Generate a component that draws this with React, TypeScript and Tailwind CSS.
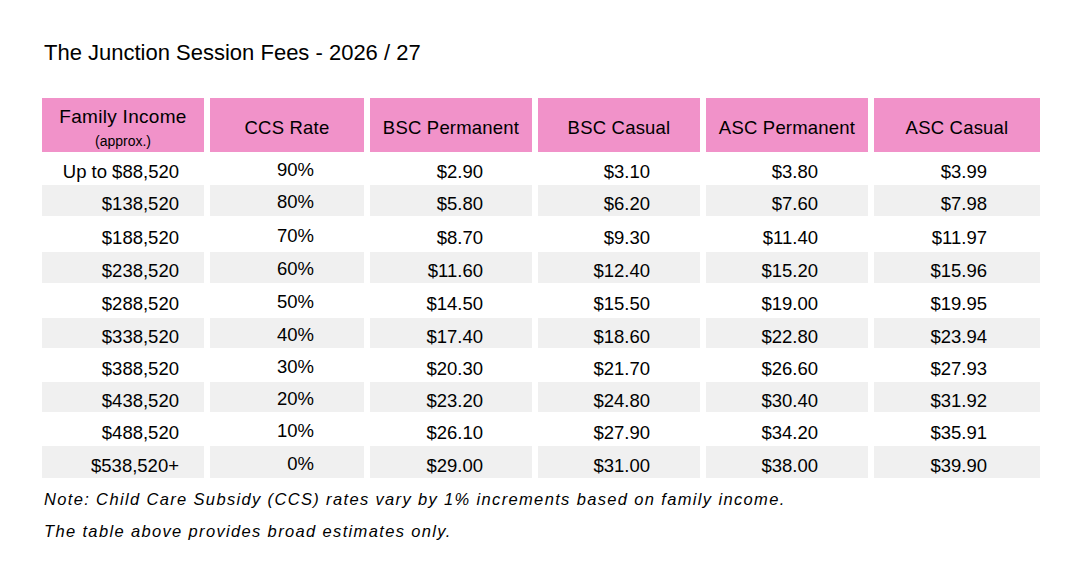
import React from "react";

type Row = { inc: string; ccs: string; v: string[] };

const rows: Row[] = [
  { inc: "Up to $88,520", ccs: "90%", v: ["$2.90", "$3.10", "$3.80", "$3.99"] },
  { inc: "$138,520", ccs: "80%", v: ["$5.80", "$6.20", "$7.60", "$7.98"] },
  { inc: "$188,520", ccs: "70%", v: ["$8.70", "$9.30", "$11.40", "$11.97"] },
  { inc: "$238,520", ccs: "60%", v: ["$11.60", "$12.40", "$15.20", "$15.96"] },
  { inc: "$288,520", ccs: "50%", v: ["$14.50", "$15.50", "$19.00", "$19.95"] },
  { inc: "$338,520", ccs: "40%", v: ["$17.40", "$18.60", "$22.80", "$23.94"] },
  { inc: "$388,520", ccs: "30%", v: ["$20.30", "$21.70", "$26.60", "$27.93"] },
  { inc: "$438,520", ccs: "20%", v: ["$23.20", "$24.80", "$30.40", "$31.92"] },
  { inc: "$488,520", ccs: "10%", v: ["$26.10", "$27.90", "$34.20", "$35.91"] },
  { inc: "$538,520+", ccs: "0%", v: ["$29.00", "$31.00", "$38.00", "$39.90"] },
];

const heights = ["h-[33px]", "h-[31px]", "h-[36px]", "h-[31px]", "h-[35px]", "h-[30px]", "h-[34px]", "h-[30px]", "h-[34px]", "h-[32px]"];
const valPad = ["pr-[49px]", "pr-[50px]", "pr-[50px]", "pr-[53px]"];

const grid = "grid grid-cols-[162px_154px_162px_162px_162px_166px] gap-x-[6px]";

export default function App() {
  return (
    <div className="w-[1090px] h-[580px] bg-white pl-[42px] pt-[39px] text-black font-['Liberation_Sans',Arial,sans-serif]">
      <div className="pl-[2px] text-[22px] leading-[28px] h-[28px]">The Junction Session Fees - 2026 / 27</div>
      <div className="mt-[31px]">
        <div className={`${grid} h-[54px]`}>
          <div className="bg-[#f192c9] flex flex-col items-center pt-[8px]">
            <div className="text-[19px] leading-[22px] tracking-[0.3px]">Family Income</div>
            <div className="text-[14px] leading-[26px]">(approx.)</div>
          </div>
          {["CCS Rate", "BSC Permanent", "BSC Casual", "ASC Permanent", "ASC Casual"].map((h) => (
            <div key={h} className="bg-[#f192c9] flex items-center justify-center pt-[3px] text-[18.5px] leading-[22px] tracking-[0.2px]">
              {h}
            </div>
          ))}
        </div>
        {rows.map((r, i) => {
          const bg = i % 2 === 1 ? "bg-[#f0f0f0]" : "bg-white";
          return (
            <div key={r.inc} className={`${grid} ${heights[i]} text-[18.5px] leading-[20px]`}>
              <div className={`${bg} flex items-center justify-end pr-[25px] pt-[7px]`}>{r.inc}</div>
              <div className={`${bg} flex items-center justify-end pr-[50px] pt-[3px]`}>{r.ccs}</div>
              {r.v.map((v, j) => (
                <div key={j} className={`${bg} flex items-center justify-end ${valPad[j]} pt-[7px]`}>
                  {v}
                </div>
              ))}
            </div>
          );
        })}
      </div>
      <div className="mt-[5px] pl-[2px] italic text-[16.5px] leading-[32px] tracking-[1.35px]">
        <div>Note: Child Care Subsidy (CCS) rates vary by 1% increments based on family income.</div>
        <div>The table above provides broad estimates only.</div>
      </div>
    </div>
  );
}
